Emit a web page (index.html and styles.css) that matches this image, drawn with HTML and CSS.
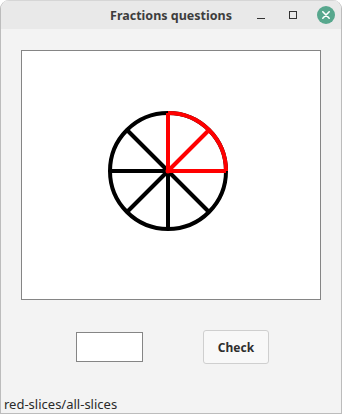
FILE: index.html
```html
<!DOCTYPE html>
<html>
<head>
<meta charset="utf-8">
<link rel="stylesheet" href="styles.css">
</head>
<body>
<div class="window">
  <div class="titlebar">
    <div class="title">Fractions questions</div>
    <div class="controls">
      <span class="ctl min"></span>
      <span class="ctl max"><span class="sq"></span></span>
      <span class="ctl close">
        <svg width="18" height="18" viewBox="0 0 18 18"><circle cx="9" cy="9" r="9" fill="#57a78d"/><path d="M5.8 5.8 L12.2 12.2 M12.2 5.8 L5.8 12.2" stroke="#fff" stroke-width="1.6" stroke-linecap="round"/></svg>
      </span>
    </div>
  </div>
  <div class="content">
    <div class="canvas">
      <svg width="298" height="248" viewBox="0 0 298 248">
        <g transform="translate(146,120)" stroke-width="4" fill="none">
          <circle r="58" stroke="#000"/>
          <g stroke="#000" stroke-linecap="butt">
            <line x1="0" y1="0" x2="-58" y2="0"/>
            <line x1="0" y1="0" x2="0" y2="58"/>
            <line x1="0" y1="0" x2="-41" y2="-41"/>
            <line x1="0" y1="0" x2="-41" y2="41"/>
            <line x1="0" y1="0" x2="41" y2="41"/>
          </g>
          <g stroke="#ff0000">
            <path d="M0 -58 A58 58 0 0 1 58 0"/>
            <line x1="0" y1="0" x2="0" y2="-58"/>
            <line x1="0" y1="0" x2="41" y2="-41"/>
            <line x1="0" y1="0" x2="58" y2="0"/>
          </g>
          <circle r="2.5" fill="#ff0000" stroke="none"/>
        </g>
      </svg>
    </div>
    <div class="controls-row">
      <input class="answer" type="text">
      <button class="check">Check</button>
    </div>
    <div class="status">red-slices/all-slices</div>
  </div>
</div>
</body>
</html>
```
FILE: styles.css
```css
html, body {
  margin: 0;
  padding: 0;
  background: #ffffff;
}
.window {
  width: 342px;
  height: 414px;
  box-sizing: border-box;
  border: 1px solid #bcbcbc;
  border-top: none;
  border-radius: 9px 9px 0 0;
  overflow: hidden;
  background: #f3f3f3;
  display: flex;
  flex-direction: column;
  font-family: "Noto Sans", "Open Sans", sans-serif;
}
.titlebar {
  height: 29px;
  flex: none;
  background: #e9e9e9;
  position: relative;
  display: flex;
  align-items: center;
  justify-content: center;
  border-top: 1px solid #d6d6d6;
  box-sizing: border-box;
}
.title {
  font-weight: bold;
  font-size: 12.5px;
  color: #3d3d3d;
  padding-top: 1px;
}
.controls {
  position: absolute;
  right: 6px;
  top: 5px;
  display: flex;
  align-items: center;
}
.ctl {
  display: flex;
  align-items: center;
  justify-content: center;
}
.min {
  width: 8px;
  height: 1px;
  background: #333;
  margin-top: 6px;
  margin-right: 24px;
}
.max {
  width: 8px;
  height: 8px;
  margin-right: 20px;
}
.max .sq {
  width: 6px;
  height: 6px;
  border: 1px solid #333;
}
.close {
  width: 18px;
  height: 18px;
}
.content {
  flex: 1;
  display: flex;
  flex-direction: column;
}
.canvas {
  margin: 21px 0 0 20px;
  width: 300px;
  height: 250px;
  box-sizing: border-box;
  border: 1px solid #858585;
  background: #fff;
}
.canvas svg {
  display: block;
}
.controls-row {
  display: flex;
  align-items: center;
  margin-top: 30px;
  padding-left: 75px;
}
.answer {
  width: 67px;
  height: 30px;
  box-sizing: border-box;
  border: 1px solid #858585;
  background: #fff;
  margin: 0;
  padding: 0;
  outline: none;
}
.check {
  margin-left: 60px;
  width: 66px;
  height: 34px;
  box-sizing: border-box;
  border: 1px solid #cfcfcf;
  border-radius: 3px;
  background: #f8f8f8;
  font-family: "Noto Sans", "Open Sans", sans-serif;
  font-weight: bold;
  font-size: 12px;
  color: #2e2e2e;
  padding: 0;
}
.status {
  margin-top: auto;
  padding-left: 3px;
  padding-bottom: 0;
  font-size: 13px;
  color: #2a2a2a;
  line-height: 17px;
}
```
